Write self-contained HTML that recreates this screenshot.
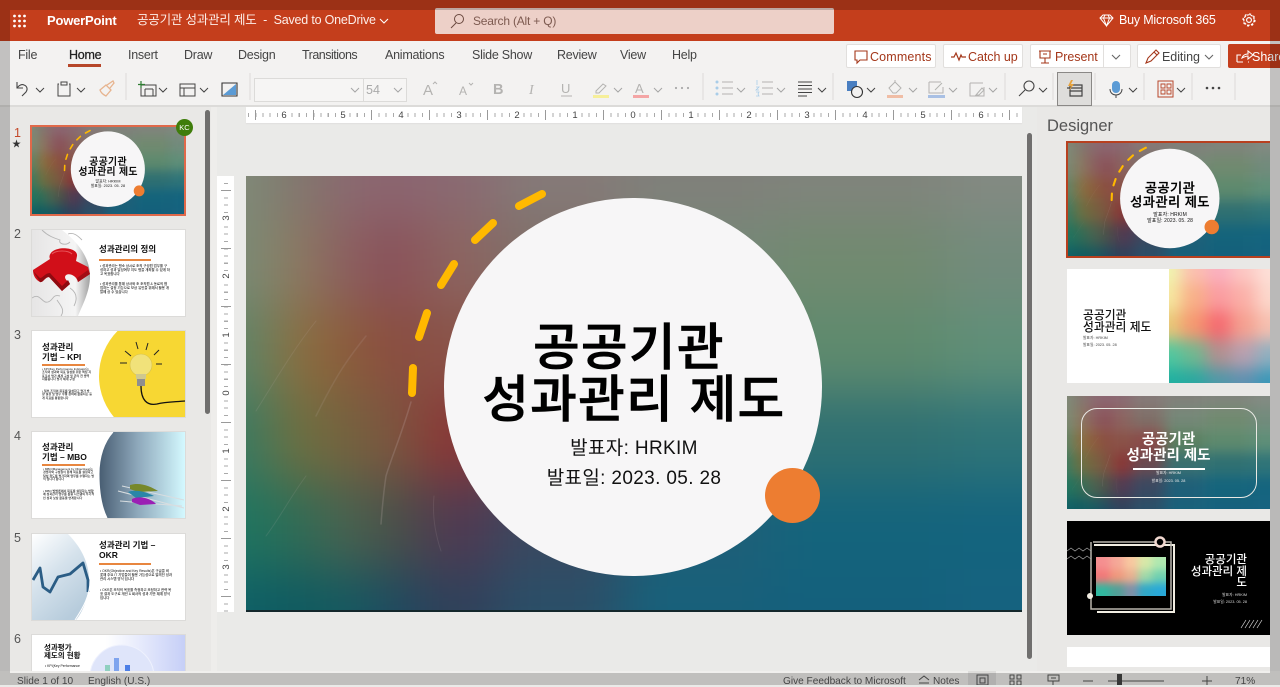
<!DOCTYPE html>
<html lang="ko"><head><meta charset="utf-8"><title>PowerPoint</title>
<style>
*{box-sizing:border-box}
html,body{margin:0;padding:0;width:1280px;height:685px;overflow:hidden;background:#eaeae8;font-family:"Liberation Sans","Noto Sans CJK KR",sans-serif;color:#333}
.a{position:absolute}
.t{position:absolute;white-space:nowrap;line-height:1}
.tab{top:49px;font-size:12.5px;color:#444;letter-spacing:-.25px}
.btn{position:absolute;top:44px;height:24px;background:#fff;border:1px solid #e1dfdd;border-radius:2px}
.btxt{top:51px;font-size:12.5px;color:#a4371a;letter-spacing:-.05px}
.s{position:absolute;left:0;top:0;width:776px;height:436px;transform-origin:0 0;overflow:hidden;background:#5a7a70}
.s .c{position:absolute;left:198px;top:22px;width:378px;height:378px;border-radius:50%;background:#f7f6f7}
.s .o{position:absolute;left:519px;top:292px;width:55px;height:55px;border-radius:50%;background:#ed7d31}
.s .h{position:absolute;left:199px;width:378px;text-align:center;font-size:50.500px;line-height:52px;color:#000;font-weight:500;white-space:nowrap;letter-spacing:1.500px;-webkit-text-stroke:.8px #000}
.s .h span{position:relative;left:-5px}
.s .p{position:absolute;left:199px;width:378px;text-align:center;font-size:19px;line-height:24px;color:#111;white-space:nowrap;letter-spacing:.35px}
.th{position:absolute;left:32px;width:153px;height:86px;background:#fff;overflow:hidden;outline:1px solid #dcdbd9}
.n{position:absolute;left:14px;font-size:12.500px;color:#555}
.tt{position:absolute;font-size:8.500px;line-height:10px;font-weight:700;color:#111;white-space:nowrap}
.bd{position:absolute;font-size:3.400px;line-height:4.200px;color:#111;font-weight:500}
.ol{position:absolute;height:1.500px;background:#e8863f}
.d{position:absolute;left:1067px;width:203px;overflow:hidden}
.m{position:absolute;font-size:3.800px;color:#444;white-space:nowrap;line-height:1}
.st{top:677px;font-size:10.100px;color:#555}
</style></head><body>

<svg class="a" width="0" height="0" style="left:0;top:0">
 <defs>
  <filter id="bl" filterUnits="userSpaceOnUse" x="-120" y="-120" width="1020" height="680" color-interpolation-filters="sRGB"><feGaussianBlur stdDeviation="26"/></filter>
  <filter id="bl2" filterUnits="userSpaceOnUse" x="-40" y="-40" width="190" height="200" color-interpolation-filters="sRGB"><feGaussianBlur stdDeviation="8"/></filter>
  <filter id="bl3" filterUnits="userSpaceOnUse" x="-30" y="-30" width="140" height="100" color-interpolation-filters="sRGB"><feGaussianBlur stdDeviation="4"/></filter>
  <g id="mesh"><g filter="url(#bl)">
   <rect x="-100" y="-100" width="125" height="144" fill="#7f8a78"/><rect x="25" y="-100" width="50" height="144" fill="#82776e"/><rect x="75" y="-100" width="50" height="144" fill="#8a6a70"/><rect x="125" y="-100" width="50" height="144" fill="#8c6470"/><rect x="175" y="-100" width="75" height="144" fill="#8a6a72"/><rect x="250" y="-100" width="125" height="144" fill="#857a78"/><rect x="375" y="-100" width="150" height="144" fill="#80807a"/><rect x="525" y="-100" width="175" height="144" fill="#80847c"/><rect x="700" y="-100" width="180" height="144" fill="#838a82"/>
   <rect x="-100" y="44" width="125" height="87" fill="#7a8a75"/><rect x="25" y="44" width="50" height="87" fill="#8c7a60"/><rect x="75" y="44" width="50" height="87" fill="#8b5f60"/><rect x="125" y="44" width="50" height="87" fill="#8a4f58"/><rect x="175" y="44" width="75" height="87" fill="#8c6460"/><rect x="250" y="44" width="125" height="87" fill="#7f6f68"/><rect x="375" y="44" width="150" height="87" fill="#758878"/><rect x="525" y="44" width="175" height="87" fill="#718a70"/><rect x="700" y="44" width="180" height="87" fill="#728b7c"/>
   <rect x="-100" y="131" width="125" height="87" fill="#5e8468"/><rect x="25" y="131" width="50" height="87" fill="#8a7040"/><rect x="75" y="131" width="50" height="87" fill="#8c5d3c"/><rect x="125" y="131" width="50" height="87" fill="#8a4c40"/><rect x="175" y="131" width="75" height="87" fill="#8a5348"/><rect x="250" y="131" width="125" height="87" fill="#8a4a48"/><rect x="375" y="131" width="150" height="87" fill="#5a8060"/><rect x="525" y="131" width="175" height="87" fill="#5e8a6e"/><rect x="700" y="131" width="180" height="87" fill="#5f8f78"/>
   <rect x="-100" y="218" width="125" height="88" fill="#3a7a62"/><rect x="25" y="218" width="50" height="88" fill="#6e7040"/><rect x="75" y="218" width="50" height="88" fill="#74623f"/><rect x="125" y="218" width="50" height="88" fill="#7c5540"/><rect x="175" y="218" width="75" height="88" fill="#8a3636"/><rect x="250" y="218" width="125" height="88" fill="#6a4a50"/><rect x="375" y="218" width="150" height="88" fill="#3a7070"/><rect x="525" y="218" width="175" height="88" fill="#2f7072"/><rect x="700" y="218" width="180" height="88" fill="#2f7478"/>
   <rect x="-100" y="306" width="125" height="87" fill="#1f7560"/><rect x="25" y="306" width="50" height="87" fill="#2f6c55"/><rect x="75" y="306" width="50" height="87" fill="#4a6350"/><rect x="125" y="306" width="50" height="87" fill="#4a5048"/><rect x="175" y="306" width="75" height="87" fill="#503a52"/><rect x="250" y="306" width="125" height="87" fill="#3a4860"/><rect x="375" y="306" width="150" height="87" fill="#1e5f78"/><rect x="525" y="306" width="175" height="87" fill="#14647c"/><rect x="700" y="306" width="180" height="87" fill="#14647e"/>
   <rect x="-100" y="393" width="125" height="140" fill="#0f6066"/><rect x="25" y="393" width="50" height="140" fill="#0f5a60"/><rect x="75" y="393" width="50" height="140" fill="#155a60"/><rect x="125" y="393" width="50" height="140" fill="#1f4a60"/><rect x="175" y="393" width="75" height="140" fill="#30405a"/><rect x="250" y="393" width="125" height="140" fill="#2a4f68"/><rect x="375" y="393" width="150" height="140" fill="#18607a"/><rect x="525" y="393" width="175" height="140" fill="#14607c"/><rect x="700" y="393" width="180" height="140" fill="#15627f"/>
  </g>
  <g fill="none" stroke="#c8b8b8" stroke-opacity=".13" stroke-linecap="round">
   <path d="M165 226C155 260 146 280 140 300C137 320 136 335 135 348" stroke-width="1.500" stroke-opacity=".22"/>
   <path d="M120 160C100 185 90 200 70 240" stroke-width="1.500"/><path d="M70 145C50 170 35 195 10 235" stroke-width="1"/><path d="M60 300C45 320 35 340 20 360" stroke-width="1"/>
   <path d="M188 320C186 340 190 360 195 375" stroke-width="1"/>
  </g></g>
 </defs>
</svg>

<!-- header -->
<div class="a" style="left:0;top:0;width:1280px;height:41px;background:#c43e1c"></div>
<div class="a" style="left:435px;top:8px;width:399px;height:26px;background:#edd0c8;border-radius:2px"></div>
<div class="t" style="left:47px;top:14px;font-size:13px;font-weight:700;color:#fff;letter-spacing:-.2px">PowerPoint</div>
<div class="t" style="left:137px;top:14px;font-size:12.500px;color:#fdeee9;letter-spacing:-.2px">공공기관 성과관리 제도 &nbsp;-&nbsp; Saved to OneDrive</div>
<div class="t" style="left:473px;top:15px;font-size:12px;color:#7d5a50;letter-spacing:-.2px">Search (Alt + Q)</div>
<div class="t" style="left:1119px;top:14px;font-size:12.500px;color:#fff;letter-spacing:-.2px">Buy Microsoft 365</div>

<!-- tabs + toolbar -->
<div class="a" style="left:0;top:41px;width:1280px;height:64px;background:#f3f2f1"></div>
<div class="a" style="left:0;top:105px;width:1280px;height:2px;background:#dcdbd9"></div>
<div class="t tab" style="left:18px">File</div>
<div class="t tab" style="left:69px;color:#222;-webkit-text-stroke:.25px #222">Home</div>
<div class="a" style="left:68px;top:64px;width:33px;height:3px;background:#b7472a"></div>
<div class="t tab" style="left:128px">Insert</div>
<div class="t tab" style="left:184px">Draw</div>
<div class="t tab" style="left:238px">Design</div>
<div class="t tab" style="left:302px;letter-spacing:-.5px">Transitions</div>
<div class="t tab" style="left:385px">Animations</div>
<div class="t tab" style="left:472px">Slide Show</div>
<div class="t tab" style="left:557px">Review</div>
<div class="t tab" style="left:620px">View</div>
<div class="t tab" style="left:672px">Help</div>

<div class="btn" style="left:846px;width:90px"></div>
<div class="t btxt" style="left:870px;letter-spacing:.15px">Comments</div>
<div class="btn" style="left:943px;width:80px"></div>
<div class="t btxt" style="left:968px">Catch up</div>
<div class="btn" style="left:1030px;width:101px"></div>
<div class="a" style="left:1103px;top:45px;width:1px;height:22px;background:#e1dfdd"></div>
<div class="t btxt" style="left:1055px">Present</div>
<div class="btn" style="left:1137px;width:84px"></div>
<div class="t btxt" style="left:1162px;color:#444">Editing</div>
<div class="a" style="left:1228px;top:44px;width:52px;height:24px;background:#c43e1c;border-radius:2px 0 0 2px"></div>
<div class="t" style="left:1252px;top:51px;font-size:12.500px;color:#fff">Share</div>

<div class="a" style="left:254px;top:78px;width:110px;height:24px;background:#f6f5f4;border:1px solid #dcdbd9"></div>
<div class="a" style="left:363px;top:78px;width:44px;height:24px;background:#f6f5f4;border:1px solid #dcdbd9"></div>
<div class="t" style="left:366px;top:84px;font-size:12.500px;color:#aaa">54</div>
<div class="a" style="left:1057px;top:72px;width:35px;height:34px;background:#dedddb;border:1px solid #8a8886"></div>

<svg class="a" style="left:0;top:0" width="1280" height="110" viewBox="0 0 1280 110" fill="none">
 <g fill="#fff"><circle cx="14.500" cy="16" r="1.400"/><circle cx="19.500" cy="16" r="1.400"/><circle cx="24.500" cy="16" r="1.400"/><circle cx="14.500" cy="21" r="1.400"/><circle cx="19.500" cy="21" r="1.400"/><circle cx="24.500" cy="21" r="1.400"/><circle cx="14.500" cy="26" r="1.400"/><circle cx="19.500" cy="26" r="1.400"/><circle cx="24.500" cy="26" r="1.400"/></g>
 <path d="M380 19l4 4 4-4" stroke="#fff" stroke-width="1.100"/>
 <g stroke="#6b4a40" stroke-width="1"><circle cx="459" cy="19" r="4.500"/><path d="M456 23l-5 5"/></g>
 <path d="M1100 18l3-3h7l3 3-6.500 8zM1100 18h13M1105 15l-1.500 3 3 8 3-8-1.500-3" stroke="#fff" stroke-width="1"/>
 <g stroke="#fff" stroke-width="1.200"><circle cx="1249" cy="20" r="2.400"/><circle cx="1249" cy="20" r="5.200" stroke-dasharray="2.500 1.200"/><circle cx="1249" cy="20" r="6" stroke-dasharray="2 2.700"/></g>
 <path d="M855 51h12v9h-7l-3 3v-3h-2z" stroke="#a4371a" stroke-width="1.100"/>
 <path d="M951 57h3l2-4 3 7 2-5 1 2h4" stroke="#a4371a" stroke-width="1.200"/>
 <path d="M1039 51h12M1040 51v7h10v-7M1045 58v5M1041 63h8M1043 54h4" stroke="#a4371a" stroke-width="1.100"/>
 <path d="M1112 55l4 4 4-4M1205 55l4 4 4-4" stroke="#666" stroke-width="1.100"/>
 <path d="M1146 63l2-5 8-8 3 3-8 8zM1154 52l3 3" stroke="#a4371a" stroke-width="1.100"/>
 <path d="M1237 62v-7h4M1243 62h-6M1249 62h-1M1242 58c1-3 3-4 6-4v-3l5 4-5 4v-3c-2 0-4 1-6 2z" stroke="#fff" stroke-width="1.100"/>
 <g stroke="#dcdbd9"><path d="M126 73v27M250 73v27M703 73v27M833 73v27M1005 73v27M1053 73v27M1095 73v27M1144 73v27M1192 73v27M1235 73v27"/></g>
 <path d="M17 82v6h6M17 88c2-3 5-4 7-3 3 1 4 4 2 7l-4 4" stroke="#444" stroke-width="1.100"/>
 <path d="M59 84h-1v12h12V84h-1M61 82h6v3h-6z" stroke="#444" stroke-width="1"/>
 <path d="M100 90l6-5 5 5-5 6c-2-1-5-3-6-6zM107 85l6-4 1 2-4 5" stroke="#e7b48f" stroke-width="1.300"/>
 <path d="M141 85h15v11h-15zM145 89h8M145 89v7M153 89v7" stroke="#444" stroke-width="1"/><path d="M141 81v7M138 84.500h7" stroke="#2e7d32" stroke-width="1.200"/>
 <path d="M180 84h15v12h-15zM180 88h15M184 88v8h7" stroke="#444" stroke-width="1"/>
 <path d="M222 83h15v13h-15z" stroke="#333" stroke-width="1.100"/><path d="M223 95l13-11v11z" fill="#5b9bd5"/>
 <g stroke="#444" stroke-width="1"><path d="M36 88l4 4 4-4M77 88l4 4 4-4M159 88l4 4 4-4M200 88l4 4 4-4M818 88l4 4 4-4M867 88l4 4 4-4M1039 88l4 4 4-4M1129 88l4 4 4-4M1177 88l4 4 4-4"/></g>
 <g stroke="#a6a6a6" stroke-width="1"><path d="M351 88l4 4 4-4M394 88l4 4 4-4M614 88l4 4 4-4M654 88l4 4 4-4M737 88l4 4 4-4M777 88l4 4 4-4M909 88l4 4 4-4M949 88l4 4 4-4M989 88l4 4 4-4"/></g>
 <g fill="#b4b3b1" font-family="Liberation Sans"><text x="423" y="95" font-size="15">A</text><text x="459" y="95" font-size="12">A</text><text x="493" y="94" font-size="14.500" font-weight="700">B</text><text x="529" y="94" font-size="14" font-style="italic" font-family="Liberation Serif">I</text><text x="561" y="93" font-size="13">U</text><text x="635" y="93" font-size="13">A</text></g>
 <path d="M433 84l2-2 2 2M469 83l2 2 2-2M561 96h11" stroke="#b4b3b1"/>
 <path d="M596 91l7-7 3 2-7 7h-3z" stroke="#b4b3b1"/><path d="M593 95h16v3h-16z" fill="#f6ef9a"/>
 <path d="M633 95h16v3h-16z" fill="#f4a5a5"/>
 <g fill="#aaa"><circle cx="676" cy="88" r="1.100"/><circle cx="682" cy="88" r="1.100"/><circle cx="688" cy="88" r="1.100"/></g>
 <g stroke="#b4b3b1"><path d="M722 82h11M722 88h11M722 94h11M762 82h11M762 88h11M762 94h11"/></g>
 <g fill="#a9cde8"><circle cx="717" cy="82" r="1.500"/><circle cx="717" cy="88" r="1.500"/><circle cx="717" cy="94" r="1.500"/></g>
 <path d="M757 80v5M756 87h3l-3 3h3M756 92h3l-1 2 1 2h-3" stroke="#a9cde8" stroke-width=".8"/>
 <path d="M798 82h14M798 85.500h14M798 89h14M798 92.500h14M798 96h9" stroke="#444"/>
 <path d="M847 81h10v10h-10z" fill="#4a7fc1"/><circle cx="857" cy="92" r="5.500" fill="#f3f2f1" stroke="#333" stroke-width="1.100"/>
 <path d="M889 88l6-6 6 6-5 5h-3zM895 82v-2" stroke="#b4b3b1"/><path d="M887 95h16v3h-16z" fill="#f0bda5"/>
 <path d="M929 82h12M929 82v11h14v-6M935 90l7-7" stroke="#b4b3b1"/><path d="M928 95h17v3h-17z" fill="#a9c0e4"/>
 <path d="M970 83h13M970 83v13h14V87M976 95l6-7 2 2-5 5z" stroke="#b4b3b1"/>
 <circle cx="1029" cy="86" r="5" stroke="#444" stroke-width="1.100"/><path d="M1025 90l-6 6" stroke="#444" stroke-width="1.100"/>
 <path d="M1070 85h12v11h-12zM1067 88h15M1070 96v-5h12" stroke="#444" stroke-width="1.200"/><path d="M1071 80l-3 6h3l-2 5 5-7h-3l2-4z" fill="#e8a33d"/>
 <rect x="1112" y="81" width="8" height="12" rx="4" fill="#5b9bd5"/><path d="M1110 89c0 8 12 8 12 0M1116 95v3" stroke="#444"/>
 <path d="M1158 81h15v16h-15z" stroke="#b7472a"/><path d="M1161 84h4v4h-4zM1167 84h4v4h-4zM1161 90h4v4h-4zM1167 90h4v4h-4z" stroke="#b7472a" stroke-width=".9"/>
 <g fill="#444"><circle cx="1207" cy="88" r="1.300"/><circle cx="1213" cy="88" r="1.300"/><circle cx="1219" cy="88" r="1.300"/></g>
</svg>

<!-- thumbnail panel -->
<div class="a" style="left:0;top:107px;width:211px;height:564px;background:#e9e8e6"></div>
<div class="a" style="left:205px;top:110px;width:5px;height:304px;background:#6f6e6d;border-radius:3px"></div>
<div class="a" style="left:211px;top:107px;width:6px;height:564px;background:#eeedeb"></div>

<div class="n" style="top:126px;color:#c4492a">1</div>
<div class="t" style="left:12px;top:140px;font-size:9px;color:#333">★</div>
<div class="a" style="left:30px;top:125px;width:156px;height:91px;background:#e0694a"></div>
<div class="a" style="left:32px;top:127px;width:152px;height:87px;overflow:hidden">
 <div class="s" style="transform:scale(.196,.2)"><svg class="a" style="left:0;top:0" width="776" height="436" viewBox="0 0 776 436"><use href="#mesh"/></svg><div class="c"></div><div class="o"></div>
  <svg class="a" style="left:0;top:0" width="776" height="436" fill="none" stroke="#ffb900" stroke-width="8" stroke-linecap="round"><path d="M296 18L273 30M247 47L229 64M208 88L195 109M181 137L173 161M167 192L166 217"/></svg>
  <div class="h" style="top:146px">공공기관<br>성과관리 제도</div><div class="p" style="top:260px">발표자: HRKIM<br>발표일: 2023. 05. 28</div></div>
</div>
<div class="a" style="left:176px;top:119px;width:17px;height:17px;border-radius:50%;background:#3f7d0b;color:#fff;font-size:7.500px;line-height:17px;text-align:center">KC</div>

<div class="n" style="top:227px">2</div>
<div class="th" style="top:230px">
 <svg class="a" style="left:0;top:0" width="153" height="86">
  <defs><linearGradient id="pg" x1="0" x2="1"><stop offset="0" stop-color="#e6e5e5"/><stop offset=".75" stop-color="#f5f5f5"/><stop offset="1" stop-color="#a0a0a0"/></linearGradient></defs>
  <path d="M0 0H30C46 12 58 28 58 46C58 62 50 76 46 86H0z" fill="url(#pg)"/>
  <path d="M10 0C16 6 22 8 28 10C26 14 34 16 38 12M36 4c6-2 10 2 14 6M0 68c8-6 10 6 16 4s4-8 12-6M25 70c4 6 8 10 4 16M38 58c6 4 8 10 4 18" stroke="#b5b5b5" fill="none" stroke-width=".9"/>
  <path d="M1 40L18 29C16 25 20 20 26 19C33 17 46 19 45 26L44 31L56 37L58 44L46 52C44 44 34 42 33 47C33 50 37 52 38 54L30 61L17 47C13 47 11 53 8 52C4 50 1 46 1 40z" fill="#d10f19"/>
  <path d="M1 41L8 52C11 53 13 47 17 47L30 61L38 54L36 50L30 56L18 43C13 43 11 48 8 48z" fill="#8f0a10"/>
  <path d="M46 52L58 44L56 40L45 48z" fill="#a30c14"/>
  <path d="M20 24C24 20 36 20 40 24" stroke="#e8545a" stroke-width="1" fill="none"/>
 </svg>
 <div class="tt" style="left:67px;top:14px">성과관리의 정의</div><div class="ol" style="left:67px;top:29px;width:52px"></div>
 <div class="bd" style="left:68px;top:34px;width:70px">• 성과관리는 평소 상시로 조직 구성원 업무를 구성하고 성과 달성여부 지도 평을 개최할 수 있게 하고 목표합니다</div>
 <div class="bd" style="left:68px;top:52px;width:70px">• 성과관리를 통해 상사와 조 조직원 &amp; 동료의 협업하는 설정 기능으로 보상 유인을 위해서 활용 개발에 상 수 있습니다</div>
</div>

<div class="n" style="top:328px">3</div>
<div class="th" style="top:331px">
 <svg class="a" style="left:0;top:0" width="153" height="86" fill="none">
  <circle cx="131" cy="45" r="64" fill="#f7d733"/>
  <g stroke="#222" stroke-width="1"><path d="M93 20l6 5M104 11l2 7M116 12l-2 7M127 19l-5 5M88 32h7M124 33h6"/></g>
  <circle cx="109" cy="34" r="11" fill="#f1e27a" stroke="#d8c24a" stroke-width=".6"/><path d="M104 43h10v5h-10z" fill="#cfc88f"/><path d="M105 48h8v7h-8z" fill="#8f8f8f"/>
  <path d="M109 55c0 14 6 20 16 18c8-2 16-2 28-3" stroke="#111" stroke-width="1.300"/>
 </svg>
 <div class="tt" style="left:10px;top:11px">성과관리<br>기법 – KPI</div><div class="ol" style="left:10px;top:33px;width:43px"></div>
 <div class="bd" style="left:10px;top:37px;width:50px;font-size:3px;line-height:3.400px">• KPI(Key Performance Indicator)는 조직의 성과와 목표 달성을 위한 핵심 지표로서 평가 체계 구성 및 관리 전 영역 사용됩니다 평가 체계 구성</div>
 <div class="bd" style="left:10px;top:59px;width:50px;font-size:3px;line-height:3.400px">• 일부 조직의 목표를 달성하고 평가 방향 설정 및 업무 수행 정의에 활용되는 등 개 지표를 통합합니다</div>
</div>

<div class="n" style="top:429px">4</div>
<div class="th" style="top:432px">
 <svg class="a" style="left:0;top:0" width="153" height="86" fill="none">
  <defs><linearGradient id="mg" x1="0" x2="1"><stop offset="0" stop-color="#485d72"/><stop offset=".45" stop-color="#8ea8bb"/><stop offset="1" stop-color="#d4f9ff"/></linearGradient></defs>
  <path d="M81 0H153V86H75C68 72 67 55 67 42C67 25 72 10 81 0z" fill="url(#mg)"/>
  <path d="M81 0C72 10 67 25 67 42C67 55 68 72 75 86" stroke="#fff" stroke-width="1"/>
  <path d="M90 54l62 14M86 59l66 17M88 69l62 5" stroke="#d8dde0" stroke-width="1"/>
  <path d="M98 53c10-3 20 1 28 6l-20 1-8-3z" fill="#77882a"/><path d="M96 60c8-3 18 0 26 4l-18 2z" fill="#2a86a8"/><path d="M100 67c8-4 20 0 24 5l-16 1-8-3z" fill="#9b1fb4"/>
 </svg>
 <div class="tt" style="left:10px;top:10px">성과관리<br>기법 – MBO</div><div class="ol" style="left:10px;top:32px;width:43px"></div>
 <div class="bd" style="left:11px;top:36px;width:52px;font-size:3px;line-height:3.400px">• MBO(Management by Objectives)는 경영자와 구성원이 함께 목표를 설정하고 달성 정도를 평가하며 업무를 수행하는 방식 입니다 합니다</div>
 <div class="bd" style="left:11px;top:58px;width:52px;font-size:3px;line-height:3.400px">• MBO 방법론에서 목표를 설정하는 방향에 성과관리 업무를 활용 시스템의 주기적인 성과 보상 활동을 연계합니다</div>
</div>

<div class="n" style="top:531px">5</div>
<div class="th" style="top:534px">
 <svg class="a" style="left:0;top:0" width="153" height="86" fill="none">
  <defs><linearGradient id="gb" x1="0" y1="0" x2=".6" y2="1"><stop offset="0" stop-color="#ffffff"/><stop offset=".5" stop-color="#d5e2ec"/><stop offset="1" stop-color="#b7ccdc"/></linearGradient></defs>
  <path d="M0 0H36C50 14 57 30 57 46C57 62 52 76 44 86H0z" fill="url(#gb)"/>
  <path d="M1 46L8 34L11 53L18 58L26 43L38 40L51 29L56 46L56 58" stroke="#2b5d85" stroke-width="2.800" stroke-linejoin="round"/>
  <path d="M43 86c8-12 15-24 15-40" stroke="#fff"/>
 </svg>
 <div class="tt" style="left:67px;top:6px;width:75px;white-space:normal">성과관리 기법 – OKR</div><div class="ol" style="left:67px;top:29px;width:52px"></div>
 <div class="bd" style="left:68px;top:35px;width:72px">• OKR(Objective and Key Results)은 구글을 비롯해 주요 IT 기업들이 활용 가능성으로 알려진 성과관리 시스템 방식 입니다</div>
 <div class="bd" style="left:68px;top:54px;width:72px">• OKR은 조직의 목표를 측정하고 조정하고 전략 목표 결과 도구로 개인 &amp; 회사의 성과 기반 체계 방식입니다</div>
</div>

<div class="n" style="top:632px">6</div>
<div class="th" style="top:635px;height:36px">
 <svg class="a" style="left:0;top:0" width="153" height="36" fill="none">
  <defs><linearGradient id="lv" x1="0" x2="1"><stop offset=".3" stop-color="#fff"/><stop offset="1" stop-color="#c6cff7"/></linearGradient></defs>
  <rect x="40" y="0" width="113" height="36" fill="url(#lv)"/><circle cx="90" cy="42" r="32" fill="#dfe5fa" stroke="#eef1fd"/>
  <path d="M73 30h5v6h-5z" fill="#8fd0c0"/><path d="M82 23h5v13h-5z" fill="#7fa4ee"/><path d="M93 30h5v6h-5z" fill="#4d7fe6"/>
 </svg>
 <div class="tt" style="left:12px;top:9px;font-size:7.500px;line-height:8px">성과평가<br>제도의 현황</div>
 <div class="bd" style="left:13px;top:29px">• KPI(Key Performance</div>
</div>

<!-- canvas -->
<div class="a" style="left:246px;top:107px;width:776px;height:16px;background:#fff;box-shadow:0 1px 1px #e0dfdd"></div>
<div class="a" style="left:248px;top:113px;width:774px;height:4px;background-image:repeating-linear-gradient(90deg,#aaa 0 1px,transparent 1px 7.250px)"></div>
<div class="a" style="left:255px;top:110px;width:767px;height:10px;background-image:repeating-linear-gradient(90deg,#999 0 1px,transparent 1px 58px)"></div>
<div class="a" style="left:217px;top:176px;width:17px;height:436px;background:#fff"></div>
<div class="a" style="left:224px;top:183px;width:4px;height:429px;background-image:repeating-linear-gradient(180deg,#aaa 0 1px,transparent 1px 7.250px)"></div>
<div class="a" style="left:221px;top:190px;width:10px;height:422px;background-image:repeating-linear-gradient(180deg,#999 0 1px,transparent 1px 58px)"></div>
<div class="a" style="left:1027px;top:133px;width:5px;height:526px;background:#706f6e;border-radius:3px"></div>

<svg class="a" style="left:0;top:100px" width="1040" height="520" font-family="Liberation Sans" font-size="9.500" fill="#444" text-anchor="middle">
 <g><rect x="280" y="9" width="8" height="10" fill="#fff"/><text x="284" y="18">6</text><rect x="339" y="9" width="8" height="10" fill="#fff"/><text x="343" y="18">5</text><rect x="397" y="9" width="8" height="10" fill="#fff"/><text x="401" y="18">4</text><rect x="455" y="9" width="8" height="10" fill="#fff"/><text x="459" y="18">3</text><rect x="513" y="9" width="8" height="10" fill="#fff"/><text x="517" y="18">2</text><rect x="571" y="9" width="8" height="10" fill="#fff"/><text x="575" y="18">1</text><rect x="629" y="9" width="8" height="10" fill="#fff"/><text x="633" y="18">0</text><rect x="687" y="9" width="8" height="10" fill="#fff"/><text x="691" y="18">1</text><rect x="745" y="9" width="8" height="10" fill="#fff"/><text x="749" y="18">2</text><rect x="803" y="9" width="8" height="10" fill="#fff"/><text x="807" y="18">3</text><rect x="861" y="9" width="8" height="10" fill="#fff"/><text x="865" y="18">4</text><rect x="919" y="9" width="8" height="10" fill="#fff"/><text x="923" y="18">5</text><rect x="977" y="9" width="8" height="10" fill="#fff"/><text x="981" y="18">6</text></g>
 <g><rect x="221" y="114" width="10" height="8" fill="#fff"/><text transform="translate(229,118) rotate(-90)">3</text><rect x="221" y="172" width="10" height="8" fill="#fff"/><text transform="translate(229,176) rotate(-90)">2</text><rect x="221" y="231" width="10" height="8" fill="#fff"/><text transform="translate(229,235) rotate(-90)">1</text><rect x="221" y="289" width="10" height="8" fill="#fff"/><text transform="translate(229,293) rotate(-90)">0</text><rect x="221" y="347" width="10" height="8" fill="#fff"/><text transform="translate(229,351) rotate(-90)">1</text><rect x="221" y="405" width="10" height="8" fill="#fff"/><text transform="translate(229,409) rotate(-90)">2</text><rect x="221" y="463" width="10" height="8" fill="#fff"/><text transform="translate(229,467) rotate(-90)">3</text></g>
</svg>

<!-- main slide -->
<div class="s" style="left:246px;top:176px">
 <svg class="a" style="left:0;top:0" width="776" height="436" viewBox="0 0 776 436"><use href="#mesh"/></svg>
 <div class="a" style="left:0;top:434px;width:776px;height:2px;background:#14282c"></div>
 <div class="c"></div><div class="o"></div>
 <svg class="a" style="left:0;top:0" width="776" height="436" fill="none" stroke="#ffb900" stroke-width="8" stroke-linecap="round"><path d="M296 18L273 30M247 47L229 64M208 88L195 109M181 137L173 161M167 192L166 217"/></svg>
 <div class="h" style="top:146px"><span>공공기관</span><br>성과관리 제도</div>
 <div class="p" style="top:261px">발표자: HRKIM</div>
 <div class="p" style="top:291px">발표일: 2023. 05. 28</div>
</div>

<!-- designer -->
<div class="a" style="left:1037px;top:107px;width:243px;height:564px;background:#e9e8e6"></div>
<div class="t" style="left:1047px;top:118px;font-size:16.500px;color:#555">Designer</div>

<div class="d" style="left:1066px;width:204px;top:141px;height:117px;border:2px solid #b8401f;border-right:0">
 <div class="s" style="transform:scale(.263)"><svg class="a" style="left:0;top:0" width="776" height="436" viewBox="0 0 776 436"><use href="#mesh"/></svg><div class="c"></div><div class="o"></div>
  <svg class="a" style="left:0;top:0" width="776" height="436" fill="none" stroke="#ffb900" stroke-width="8" stroke-linecap="round"><path d="M296 18L273 30M247 47L229 64M208 88L195 109M181 137L173 161M167 192L166 217"/></svg>
  <div class="h" style="top:146px">공공기관<br>성과관리 제도</div><div class="p" style="top:260px">발표자: HRKIM<br>발표일: 2023. 05. 28</div></div>
</div>

<div class="d" style="top:269px;height:114px;background:#fff">
 <svg class="a" style="left:102px;top:0" width="101" height="114" viewBox="0 0 101 114"><g filter="url(#bl2)">
  <rect x="-30" y="-30" width="42" height="44" fill="#f0f5b0"/><rect x="12" y="-30" width="25" height="44" fill="#fbc0b0"/><rect x="37" y="-30" width="25" height="44" fill="#fab0c0"/><rect x="62" y="-30" width="25" height="44" fill="#fcc8c4"/><rect x="87" y="-30" width="44" height="44" fill="#fde0d8"/>
  <rect x="-30" y="14" width="42" height="28" fill="#f6e8a0"/><rect x="12" y="14" width="25" height="28" fill="#f8b088"/><rect x="37" y="14" width="25" height="28" fill="#fa9ca0"/><rect x="62" y="14" width="25" height="28" fill="#fbb0a8"/><rect x="87" y="14" width="44" height="28" fill="#fcd8cc"/>
  <rect x="-30" y="42" width="42" height="29" fill="#e8c878"/><rect x="12" y="42" width="25" height="29" fill="#f59870"/><rect x="37" y="42" width="25" height="29" fill="#f56a70"/><rect x="62" y="42" width="25" height="29" fill="#f5a090"/><rect x="87" y="42" width="44" height="29" fill="#f6c0b0"/>
  <rect x="-30" y="71" width="42" height="28" fill="#50c8a0"/><rect x="12" y="71" width="25" height="28" fill="#70b890"/><rect x="37" y="71" width="25" height="28" fill="#b09090"/><rect x="62" y="71" width="25" height="28" fill="#b8a0b0"/><rect x="87" y="71" width="44" height="28" fill="#90b0c0"/>
  <rect x="-30" y="99" width="42" height="45" fill="#20b0a0"/><rect x="12" y="99" width="25" height="45" fill="#2aa8a0"/><rect x="37" y="99" width="25" height="45" fill="#5098a8"/><rect x="62" y="99" width="25" height="45" fill="#6090b0"/><rect x="87" y="99" width="44" height="45" fill="#3a98b8"/>
 </g></svg>
 <div class="t" style="left:16px;top:40px;font-size:11.800px;line-height:12px;font-weight:500;color:#111">공공기관<br>성과관리 제도</div>
 <div class="m" style="left:16px;top:68px">발표자: HRKIM</div>
 <div class="m" style="left:16px;top:75px">발표일: 2023. 05. 28</div>
</div>

<div class="d" style="top:396px;height:113px">
 <svg class="a" style="left:0;top:0" width="203" height="113" viewBox="0 0 776 436" preserveAspectRatio="none"><use href="#mesh"/></svg>
 <div class="a" style="left:14px;top:12px;width:176px;height:90px;border:1px solid #e9e9e4;border-radius:16px"></div>
 <div class="t" style="left:0;width:203px;top:37px;text-align:center;font-size:14.500px;line-height:15.500px;font-weight:700;color:#fff">공공기관<br>성과관리 제도</div>
 <div class="a" style="left:66px;top:72px;width:72px;height:1.500px;background:#fff"></div>
 <div class="m" style="left:0;width:203px;text-align:center;top:76px;color:#eee">발표자: HRKIM</div>
 <div class="m" style="left:0;width:203px;text-align:center;top:84px;color:#eee">발표일: 2023. 05. 28</div>
</div>

<div class="d" style="top:521px;height:114px;background:#000">
 <svg class="a" style="left:0;top:0" width="203" height="114" fill="none">
  <path d="M27 24H107V91H30" stroke="#f1ede2" stroke-width="2"/><path d="M26 21H104V88H24V21" stroke="#b9b5ae" stroke-width="1.500"/>
  <circle cx="93" cy="21" r="4.500" fill="#000" stroke="#f1d8d0" stroke-width="2.500"/><circle cx="23" cy="75" r="3" fill="#f1ede2"/>
  <path d="M0 30l4-3 4 3 4-3 4 3 4-3 4 3M0 38l4-3 4 3 4-3 4 3 4-3 4 3" stroke="#aaa" stroke-width=".7"/>
  <path d="M174 107l5-8M178 107l5-8M182 107l5-8M186 107l5-8M190 107l5-8" stroke="#ddd" stroke-width=".7"/>
 </svg>
 <svg class="a" style="left:29px;top:36px" width="70" height="39" viewBox="0 0 70 39"><g filter="url(#bl3)">
  <rect x="-20" y="-20" width="34" height="33" fill="#f58f90"/><rect x="14" y="-20" width="14" height="33" fill="#f5a898"/><rect x="28" y="-20" width="14" height="33" fill="#f8c8a0"/><rect x="42" y="-20" width="14" height="33" fill="#d8e8a8"/><rect x="56" y="-20" width="34" height="33" fill="#b0e8b0"/>
  <rect x="-20" y="13" width="34" height="13" fill="#f27878"/><rect x="14" y="13" width="14" height="13" fill="#f0987c"/><rect x="28" y="13" width="14" height="13" fill="#e8b090"/><rect x="42" y="13" width="14" height="13" fill="#a0d8a8"/><rect x="56" y="13" width="34" height="13" fill="#70d0b0"/>
  <rect x="-20" y="26" width="34" height="33" fill="#30b8a0"/><rect x="14" y="26" width="14" height="33" fill="#50a098"/><rect x="28" y="26" width="14" height="33" fill="#8090a8"/><rect x="42" y="26" width="14" height="33" fill="#30a8c8"/><rect x="56" y="26" width="34" height="33" fill="#28a8d8"/>
 </g></svg>
 <div class="a" style="left:110px;top:34px;width:70px;text-align:right;font-size:11.500px;line-height:11.500px;font-weight:500;color:#fff">공공기관<br>성과관리 제<br>도</div>
 <div class="m" style="right:23px;top:73px;color:#ddd">발표자: HRKIM</div>
 <div class="m" style="right:23px;top:80px;color:#ddd">발표일: 2023. 05. 28</div>
</div>

<div class="d" style="top:647px;height:20px;background:#fff"></div>

<!-- status bar -->
<div class="a" style="left:0;top:671px;width:1280px;height:14px;background:#f0efed"></div>
<div class="a" style="left:968px;top:671px;width:28px;height:14px;background:#dedddb"></div>
<div class="t st" style="left:17px">Slide 1 of 10</div>
<div class="t st" style="left:88px">English (U.S.)</div>
<div class="t st" style="left:783px">Give Feedback to Microsoft</div>
<div class="t st" style="left:933px">Notes</div>
<svg class="a" style="left:0;top:671px" width="1280" height="14" fill="none" stroke="#555">
 <path d="M919 9l5-4 5 4M919 12h10"/>
 <path d="M977 4h11v10h-11zM980 7h5v5h-5z"/>
 <path d="M1010 4h4v4h-4zM1017 4h4v4h-4zM1010 10h4v4h-4zM1017 10h4v4h-4z"/>
 <path d="M1048 4h11v6h-11zM1053 10v5M1051 7h5"/>
 <path d="M1083 10h10M1108 10h56M1202 10h10M1207 5v10"/>
 <rect x="1117" y="3" width="5" height="12" fill="#444" stroke="none"/>
</svg>
<div class="t st" style="left:1235px">71%</div>

<!-- dim frame -->
<div class="a" style="left:0;top:0;width:1280px;height:10px;background:rgba(0,0,0,.2)"></div>
<div class="a" style="left:0;top:10px;width:10px;height:663px;background:rgba(0,0,0,.2)"></div>
<div class="a" style="left:1270px;top:10px;width:10px;height:663px;background:rgba(0,0,0,.2)"></div>
<div class="a" style="left:0;top:673px;width:1280px;height:12px;background:rgba(0,0,0,.2)"></div>
</body></html>
